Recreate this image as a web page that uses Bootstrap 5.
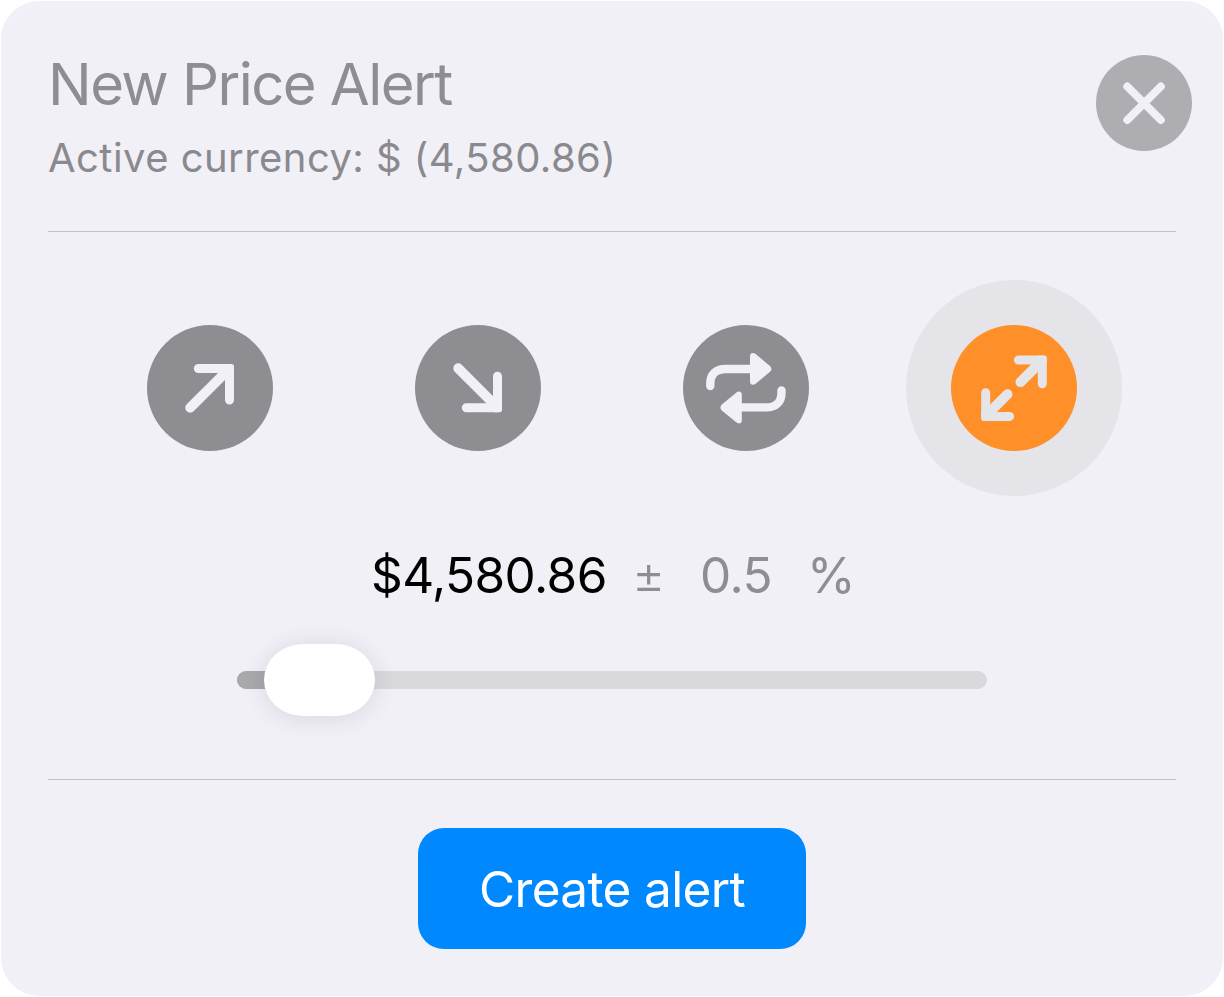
<!DOCTYPE html>
<html lang="en">
<head>
<meta charset="utf-8">
<meta name="viewport" content="width=device-width, initial-scale=1">
<title>New Price Alert</title>
<link href="https://cdn.jsdelivr.net/npm/bootstrap@5.3.0/dist/css/bootstrap.min.css" rel="stylesheet">
<style>
  body { font-family: Inter, "Liberation Sans", sans-serif; background: #fff; color: #8e8d92; overflow: hidden; }
  .alert-sheet { width: 1224px; height: 997px; padding: 1px; }
  .sheet-body { background: #f1f0f6; border-radius: 38px; height: 995px; width: 1222px; padding: 0 47px; }
  .sheet-head { height: 230px; padding-top: 54px; }
  .sheet-title { font-size: 58px; line-height: 60px; letter-spacing: -1.55px; font-weight: 400; margin-top: -1px; }
  .sheet-sub { font-size: 40px; line-height: 48px; margin-top: 20px; letter-spacing: .45px; color: #8a898e; }
  .close-btn { width: 96px; height: 96px; margin-right: -16px; background: #aeadb2; }
  .rule { height: 1px; background: #c3c2c7; }
  .modes { padding: 48px 28px 0; }
  .halo { width: 216px; height: 216px; }
  .halo.active { background: #e5e4e9; }
  .mode-btn { width: 126px; height: 126px; background: #8e8d92; color: #f1f0f6; }
  .active .mode-btn { background: #ff8f28; color: #e5e4e9; }
  .stroke-icon { fill: none; stroke: currentColor; stroke-linecap: round; stroke-linejoin: round; }
  .amount { font-size: 49.5px; line-height: 60px; margin-top: 49px; padding-left: 323px; white-space: pre; letter-spacing: -.55px; }
  .amount .price { color: #000; width: 261px; }
  .amount .sign { width: 68px; font-size: 51px; font-weight: 300; }
  .amount .pct { width: 107px; }
  .track { width: 750px; height: 18px; border-radius: 9px; background: #d9d8dd; margin: 66px auto 0; }
  .track-fill { width: 60px; height: 18px; border-radius: 9px 0 0 9px; background: #a9a8ad; }
  .thumb { width: 111px; height: 72px; margin-left: -33px; border-radius: 39px / 36px; background: #fff; box-shadow: 0 2px 26px rgba(0,0,0,.11); flex: none; }
  .lower-rule { margin-top: 90px; }
  .create-btn, .create-btn:hover { width: 388px; height: 121px; margin-top: 48px; border-radius: 26px; background: #0088ff; color: #fff; font-size: 49.5px; line-height: 60px; letter-spacing: -.65px; border: 0; padding: 0; }
</style>
</head>
<body>
<main class="alert-sheet">
  <div class="sheet-body">
    <header class="sheet-head d-flex justify-content-between align-items-start">
      <div>
        <h1 class="sheet-title mb-0">New Price Alert</h1>
        <p class="sheet-sub mb-0">Active currency: $ (4,580.86)</p>
      </div>
      <button class="close-btn btn p-0 border-0 rounded-circle" aria-label="Close">
        <svg class="d-block stroke-icon" width="96" height="96" viewBox="0 0 96 96" color="#f1f0f6" stroke-width="8"><path d="M31.3 31.5 64.8 65M64.8 31.5 31.3 65"/></svg>
      </button>
    </header>
    <div class="rule"></div>
    <div class="modes row g-0">
      <div class="col-3 d-flex justify-content-center">
        <div class="halo d-flex align-items-center justify-content-center rounded-circle">
          <button class="mode-btn btn p-0 border-0 rounded-circle" aria-label="Rises above">
            <svg class="d-block stroke-icon" width="126" height="126" viewBox="0 0 126 126" stroke-width="9"><path d="M51.3 43.5H82.5V75"/><path stroke-width="9.8" d="M43.2 82.8 81 45"/><rect x="77" y="39" width="10" height="10" rx="2.5" fill="currentColor" stroke="none"/></svg>
          </button>
        </div>
      </div>
      <div class="col-3 d-flex justify-content-center">
        <div class="halo d-flex align-items-center justify-content-center rounded-circle">
          <button class="mode-btn btn p-0 border-0 rounded-circle" aria-label="Falls below">
            <svg class="d-block stroke-icon" width="126" height="126" viewBox="0 0 126 126" stroke-width="9"><path d="M51.3 82.7H82.5V51.3"/><path stroke-width="9.8" d="M43.2 43.2 81 81"/><rect x="77" y="77.2" width="10" height="10" rx="2.5" fill="currentColor" stroke="none"/></svg>
          </button>
        </div>
      </div>
      <div class="col-3 d-flex justify-content-center">
        <div class="halo d-flex align-items-center justify-content-center rounded-circle">
          <button class="mode-btn btn p-0 border-0 rounded-circle" aria-label="Repeats">
            <svg class="d-block stroke-icon" width="126" height="126" viewBox="0 0 126 126" stroke-width="8.4"><g id="turn"><path d="M27.3 61V58.5C27.3 49.5 33 44 42.5 44H70"/><path fill="currentColor" stroke="none" d="M67 31C67 28 70 27 72.6 29.1L87 41C88.9 42.7 88.9 45.1 87 46.8L72.6 58.7C70 60.8 67 59.8 67 56.8Z"/></g><use href="#turn" transform="rotate(180 62.9 63.2)"/></svg>
          </button>
        </div>
      </div>
      <div class="col-3 d-flex justify-content-center">
        <div class="halo active d-flex align-items-center justify-content-center rounded-circle">
          <button class="mode-btn btn p-0 border-0 rounded-circle" aria-label="Moves either way">
            <svg class="d-block stroke-icon" width="126" height="126" viewBox="0 0 126 126" stroke-width="9"><g id="out"><path d="M67.4 35H91.3V58.7"/><path stroke-width="10" d="M69.5 57.1 90 36.6"/><rect x="86" y="30.5" width="9.8" height="9.8" rx="2.2" fill="currentColor" stroke="none"/></g><use href="#out" transform="rotate(180 63 63.2)"/></svg>
          </button>
        </div>
      </div>
    </div>
    <div class="amount d-flex"><span class="price">$4,580.86</span><span class="sign">±</span><span class="pct">0.5</span><span>%</span></div>
    <div class="track d-flex align-items-center" role="slider" aria-valuenow="0.5" aria-label="Percent">
      <div class="track-fill"></div><div class="thumb"></div>
    </div>
    <div class="rule lower-rule"></div>
    <div class="d-flex justify-content-center">
      <button class="create-btn btn">Create alert</button>
    </div>
  </div>
</main>
<script src="https://cdn.jsdelivr.net/npm/bootstrap@5.3.0/dist/js/bootstrap.bundle.min.js"></script>
</body>
</html>
